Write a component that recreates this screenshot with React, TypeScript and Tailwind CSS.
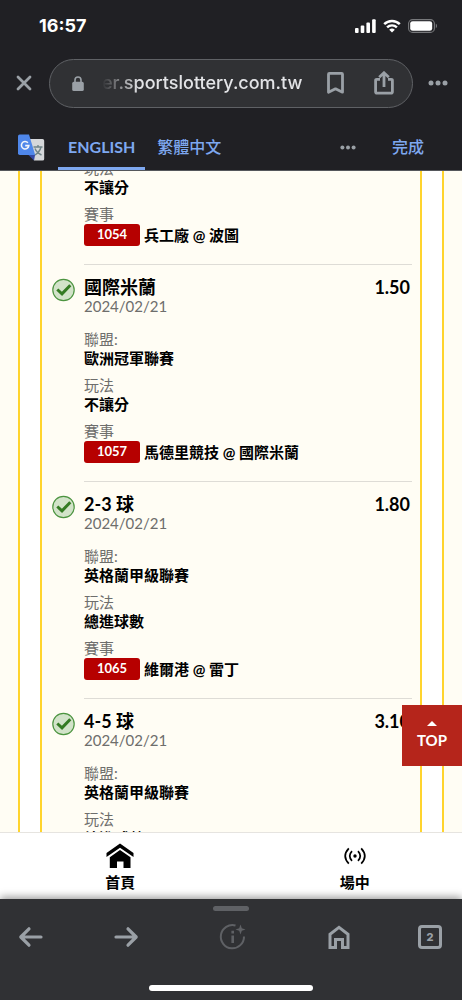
import React from 'react';

type Bet = {
  title: string;
  date: string;
  odds: string;
  league: string;
  play: string;
  code?: string;
  match?: string;
};

const bets: Bet[] = [
  { title: '國際米蘭', date: '2024/02/21', odds: '1.50', league: '歐洲冠軍聯賽', play: '不讓分', code: '1057', match: '馬德里競技 @ 國際米蘭' },
  { title: '2-3 球', date: '2024/02/21', odds: '1.80', league: '英格蘭甲級聯賽', play: '總進球數', code: '1065', match: '維爾港 @ 雷丁' },
  { title: '4-5 球', date: '2024/02/21', odds: '3.10', league: '英格蘭甲級聯賽', play: '總進球數' },
];

function StatusBar() {
  return (
    <div className="flex h-[51px] items-center justify-between pl-[39px] pr-6 text-white">
      <span className="text-[18px] leading-6 font-bold">16:57</span>
      <div className="flex items-center gap-[7px]">
        <svg width="21" height="14" viewBox="0 0 21 14" fill="currentColor" aria-hidden="true">
          <rect x="0" y="9" width="3.6" height="5" rx="1" />
          <rect x="5.7" y="6.5" width="3.6" height="7.5" rx="1" />
          <rect x="11.4" y="3.5" width="3.6" height="10.5" rx="1" />
          <rect x="17.1" y="0.3" width="3.6" height="13.7" rx="1" />
        </svg>
        <svg width="18" height="14" viewBox="0 0 18 14" fill="none" stroke="currentColor" aria-hidden="true">
          <path d="M1.2 5.2a11.2 11.2 0 0 1 15.6 0" strokeWidth="2.5" />
          <path d="M4.1 8.4a7 7 0 0 1 9.8 0" strokeWidth="2.4" />
          <path d="M9 13.6 6.2 10.8a4 4 0 0 1 5.6 0z" fill="currentColor" stroke="none" />
        </svg>
        <svg width="30" height="14" viewBox="0 0 30 14" fill="none" aria-hidden="true">
          <rect x="0.6" y="0.6" width="25.8" height="12.8" rx="4" stroke="#77787b" strokeWidth="1.1" />
          <rect x="2.2" y="2.2" width="22" height="9.6" rx="2.4" fill="#fff" />
          <path d="M27.8 4.8c1.6.6 1.6 3.8 0 4.4z" fill="#77787b" />
        </svg>
      </div>
    </div>
  );
}

function Dots({ className }: { className: string }) {
  return (
    <svg className={className} viewBox="0 0 20 6" fill="currentColor" aria-hidden="true">
      <circle cx="3" cy="3" r="2.5" />
      <circle cx="10" cy="3" r="2.5" />
      <circle cx="17" cy="3" r="2.5" />
    </svg>
  );
}

function AddressBar() {
  return (
    <div className="flex h-16 items-center pr-[14px] pl-4 text-[#9aa0a6]">
      <button aria-label="關閉" className="flex h-8 w-4 shrink-0 items-center justify-center">
        <svg className="size-4 shrink-0" viewBox="0 0 16 16" stroke="currentColor" strokeWidth="2.8" strokeLinecap="round" aria-hidden="true">
          <path d="M2 2l12 12M14 2L2 14" />
        </svg>
      </button>
      <div className="mr-[15px] ml-[17px] flex h-[49px] min-w-0 flex-1 items-center rounded-full border border-[#5f6165] bg-[#303134] pr-[18px] pl-[22px]">
        <svg className="h-[15px] w-3 shrink-0" viewBox="0 0 12 15" aria-hidden="true">
          <path d="M3 6.5V4a3 3 0 0 1 6 0v2.5" fill="none" stroke="currentColor" strokeWidth="1.6" />
          <rect x="0.2" y="5.8" width="11.6" height="9.2" rx="1.6" fill="currentColor" />
        </svg>
        <span className="ml-[18px] min-w-0 flex-1 overflow-hidden text-[18px] leading-6 font-medium whitespace-nowrap text-[#e3e4e7] [mask-image:linear-gradient(to_right,transparent,black_36px)]">
          er.sportslottery.com.tw
        </span>
        <button aria-label="書籤" className="ml-4 flex h-8 w-[18px] shrink-0 items-center justify-center">
          <svg className="h-[22px] w-[17px]" viewBox="0 0 17 22" fill="none" stroke="currentColor" strokeWidth="2.8" strokeLinejoin="round" aria-hidden="true">
            <path d="M1.5 2.2q0-.8.8-.8h12.4q.8 0 .8.8v18l-7-3.4-7 3.4z" />
          </svg>
        </button>
        <button aria-label="分享" className="ml-[30px] flex h-8 w-5 shrink-0 items-center justify-center">
          <svg className="h-6 w-5" viewBox="0 0 20 24" fill="none" stroke="currentColor" strokeWidth="2.8" aria-hidden="true">
            <path d="M6 8.3H2.8q-1.2 0-1.2 1.2v11.2q0 1.4 1.4 1.4h14q1.4 0 1.4-1.4V9.5q0-1.2-1.2-1.2H14" />
            <path d="M10 16V2.5M5.2 6.3L10 1.8l4.8 4.5" />
          </svg>
        </button>
      </div>
      <button aria-label="選單" className="flex h-8 w-5 shrink-0 items-center justify-center">
        <Dots className="h-[6px] w-5" />
      </button>
    </div>
  );
}

function TranslateBar() {
  return (
    <div className="flex h-14 items-end border-b border-[#55575b] pr-[38px] pl-[17px] text-[16px] leading-6 font-medium text-[#7ea8f0]">
      <div className="flex h-[46px] items-center">
        <svg className="h-[27px] w-7" viewBox="0 0 28 27" aria-hidden="true">
          <path d="M11 5h14.5q1.7 0 1.7 1.7v18.2q0 1.7-1.7 1.7H17z" fill="#d5d7da" />
          <path d="M11 20.5h7.2L17 26.5z" fill="#3449a5" />
          <path d="M2.7.5H12l6.2 20.5H2.7Q1 21 1 19.3V2.2Q1 .5 2.7.5z" fill="#4f87ea" />
          <path d="M10.9 8.8A3.7 3.7 0 1 0 11.8 11.6H8.2" fill="none" stroke="#f3f5fa" strokeWidth="1.6" />
          <path d="M16.5 13h9M21 11v2M24 13c-.8 3.5-3 6-6 8M18 14.5c1 2.7 3.5 5 6.5 6.5" fill="none" stroke="#6f8488" strokeWidth="1.4" />
        </svg>
      </div>
      <button className="ml-[13px] flex h-[46px] items-center justify-center border-b-[3px] border-[#7ea8f0] px-[10px] pt-[2px] font-['Lato','Noto_Sans_CJK_TC',sans-serif] font-bold">
        ENGLISH
      </button>
      <button className="ml-3 flex h-[46px] items-center">繁體中文</button>
      <button aria-label="翻譯選項" className="ml-auto flex h-[46px] w-4 items-center text-[#9aa0a6]">
        <Dots className="h-[5px] w-4" />
      </button>
      <button className="ml-9 flex h-[46px] items-center">完成</button>
    </div>
  );
}

function CheckBadge() {
  return (
    <svg className="mt-[14px] size-6 shrink-0" viewBox="0 0 24 24" fill="none" aria-label="已中">
      <circle cx="11.5" cy="12" r="10.7" fill="#d2e3c9" stroke="#4c9440" strokeWidth="1.2" />
      <path d="M5.3 11.5l4.7 4.3 8.3-8.5" stroke="#347b23" strokeWidth="3" />
    </svg>
  );
}

function Field({ label, value }: { label: string; value: string }) {
  return (
    <div className="mb-2">
      <dt className="leading-[18px] text-[#6e6e6c]">{label}</dt>
      <dd className="leading-5 font-bold">{value}</dd>
    </div>
  );
}

function Match({ code, match }: { code: string; match: string }) {
  return (
    <div>
      <dt className="leading-[18px] text-[#6e6e6c]">賽事</dt>
      <dd className="flex h-6 items-center gap-1 font-bold">
        <span className="flex h-[22px] w-14 items-center justify-center rounded-[3px] bg-[#b60000] text-[13px] text-white">{code}</span>
        <span>{match}</span>
      </dd>
    </div>
  );
}

function BetRow({ bet }: { bet: Bet }) {
  return (
    <li className="flex gap-2">
      <CheckBadge />
      <div className="min-w-0 flex-1 border-t border-[#dedcd6] pt-3 pb-[17px]">
        <div className="flex justify-between pr-[2px] text-[18px] leading-5 font-bold">
          <h2>{bet.title}</h2>
          <span>{bet.odds}</span>
        </div>
        <p className="mb-[15px] leading-[18px] text-[#6e6e6c]">{bet.date}</p>
        <dl>
          <Field label="聯盟:" value={bet.league} />
          <Field label="玩法" value={bet.play} />
          {bet.code && bet.match && <Match code={bet.code} match={bet.match} />}
        </dl>
      </div>
    </li>
  );
}

function SiteNav() {
  return (
    <nav className="grid h-[67px] shrink-0 grid-cols-2 gap-5 border-t border-[#e6e4e0] bg-white pl-[13px] text-[15px] leading-5 font-bold text-black">
      <a href="#home" className="flex flex-col items-center gap-[2px] pt-2">
        <svg className="h-[30px] w-7" viewBox="0 0 28 30" aria-hidden="true">
          <path d="M14 2.5L.5 12v4L14 6.8 27.5 16v-4z" />
          <path d="M14 9l10.5 7.3V27h-7v-6.5h-6.5V27H3.8V16.3z" />
        </svg>
        首頁
      </a>
      <a href="#live" className="flex flex-col items-center gap-[2px] pt-2">
        <svg className="h-[30px] w-[22px]" viewBox="0 0 22 30" fill="none" stroke="currentColor" strokeWidth="1.7" aria-hidden="true">
          <circle cx="11" cy="15" r="1.7" fill="currentColor" stroke="none" />
          <path d="M8 10.2q-4.5 4.8 0 9.6M14 10.2q4.5 4.8 0 9.6M4.8 7.3q-7.2 7.7 0 15.4M17.2 7.3q7.2 7.7 0 15.4" />
        </svg>
        場中
      </a>
    </nav>
  );
}

function BrowserToolbar() {
  return (
    <footer className="relative flex h-[101px] shrink-0 flex-col items-center bg-[#303134] text-[#9aa0a6] shadow-[0_-2px_8px_rgba(0,0,0,0.4)]">
      <div className="mt-[7px] h-[5px] w-9 rounded-full bg-[#5f6165]" />
      <div className="mt-[10px] flex h-8 w-full items-center justify-between pr-5 pl-[18px]">
        <button aria-label="上一頁">
          <svg className="h-[22px] w-[26px]" viewBox="0 0 26 22" fill="none" stroke="currentColor" strokeWidth="3.2" strokeLinecap="round" strokeLinejoin="round" aria-hidden="true">
            <path d="M23 11H3M11 2.8L2.8 11l8.2 8.2" />
          </svg>
        </button>
        <button aria-label="下一頁">
          <svg className="h-[22px] w-[26px]" viewBox="0 0 26 22" fill="none" stroke="currentColor" strokeWidth="3.2" strokeLinecap="round" strokeLinejoin="round" aria-hidden="true">
            <path d="M3 11h20M15 2.8l8.2 8.2-8.2 8.2" />
          </svg>
        </button>
        <button aria-label="頁面資訊" className="flex w-[52px] justify-center text-[#5f6165]">
          <svg className="size-7" viewBox="0 0 28 28" fill="none" stroke="currentColor" strokeWidth="2" aria-hidden="true">
            <path d="M16.5 2.5A11.6 11.6 0 1 0 25 13.5" />
            <path d="M13.7 12.5v7.5M13.7 7.8v2.6" strokeWidth="2.6" />
            <path d="M21.5 1.5l1.3 3.7 3.7 1.3-3.7 1.3-1.3 3.7-1.3-3.7-3.7-1.3 3.7-1.3z" fill="currentColor" stroke="none" />
          </svg>
        </button>
        <button aria-label="首頁">
          <svg className="h-6 w-[22px]" viewBox="0 0 22 24" fill="none" stroke="currentColor" strokeWidth="3" aria-hidden="true">
            <path d="M2 22.500V9.200L11 2.300l9 6.900V22.500h-5.500v-8h-7v8z" />
          </svg>
        </button>
        <button aria-label="分頁" className="flex size-6 items-center justify-center rounded-[4px] border-[3px] border-[#9aa0a6] text-[11px] leading-3 font-extrabold">
          2
        </button>
      </div>
      <div className="mt-8 h-[6px] w-[164px] rounded-full bg-white" />
    </footer>
  );
}

export default function App() {
  return (
    <div className="flex h-screen flex-col overflow-hidden bg-[#202024] font-['Inter','Noto_Sans_CJK_TC',sans-serif]">
      <header className="shrink-0">
        <StatusBar />
        <AddressBar />
        <TranslateBar />
      </header>
      <main className="relative min-h-0 flex-1 overflow-hidden bg-[#fffdf4] px-[18px] font-['Lato','Noto_Sans_CJK_TC',sans-serif] text-[15px] text-black">
        <div className="h-full border-x-2 border-[#ffd42e] bg-white px-5">
          <div className="flow-root h-full border-x-2 border-[#ffd42e] bg-[#fffdf4] pr-2 pl-[10px]">
            <ul className="-mt-3">
              <li className="pb-[17px] pl-8">
                <dl>
                  <Field label="玩法" value="不讓分" />
                  <Match code="1054" match="兵工廠 @ 波圖" />
                </dl>
              </li>
              {bets.map((bet) => (
                <BetRow key={bet.title} bet={bet} />
              ))}
            </ul>
          </div>
        </div>
        <button className="absolute right-0 bottom-[66px] flex h-[61px] w-[60px] flex-col items-center justify-center bg-[#b5251b] text-[15px] leading-5 font-bold text-white">
          <svg className="mb-1 h-[5px] w-[10px]" viewBox="0 0 10 5" fill="currentColor" aria-hidden="true">
            <path d="M5 0l5 5H0z" />
          </svg>
          TOP
        </button>
      </main>
      <SiteNav />
      <BrowserToolbar />
    </div>
  );
}
